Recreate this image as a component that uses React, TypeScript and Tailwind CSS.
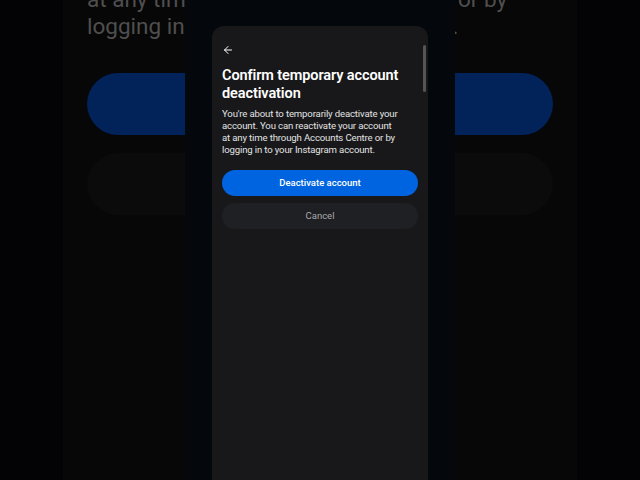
import { ArrowLeft } from "lucide-react";

const font = { fontFamily: "Roboto, 'Noto Sans', sans-serif" };

function Backdrop() {
  return (
    <div className="ml-[63px] w-[514px] h-full bg-[#070707] pl-[24px] pr-[24px] overflow-hidden">
      <div className="mt-[-14px] text-[22.5px] leading-[27px] text-[#4f4f4f] whitespace-nowrap">
        <p>at any time through Accounts Centre or by</p>
        <p>logging in to your Instagram account.</p>
      </div>
      <div className="mt-[33px] h-[62px] rounded-full bg-[#02225a]" />
      <div className="mt-[18px] h-[62px] rounded-full bg-[#0b0b0c]" />
    </div>
  );
}

function Dialog() {
  return (
    <div className="relative mt-[26px] w-[216px] flex-1 rounded-t-[12px] bg-[#18181a] px-[10px] pt-[18px]">
      <div className="absolute right-[2px] top-[19px] h-[47px] w-[3px] rounded-full bg-[#555558]" />
      <ArrowLeft size={12} strokeWidth={2} className="text-white" />
      <h1 className="mt-[11px] text-[14.5px] leading-[18px] font-semibold text-white tracking-[-0.1px]">
        Confirm temporary account deactivation
      </h1>
      <p className="mt-[5px] text-[9.6px] leading-[12px] text-[#e2e2e2] tracking-[-0.15px] whitespace-nowrap">
        You're about to temporarily deactivate your
        <br />
        account. You can reactivate your account
        <br />
        at any time through Accounts Centre or by
        <br />
        logging in to your Instagram account.
      </p>
      <button className="mt-[14px] w-full h-[26px] rounded-full bg-[#0064e0] text-[9.5px] font-medium text-white">
        Deactivate account
      </button>
      <button className="mt-[7px] w-full h-[26px] rounded-full bg-[#1f2023] text-[9.5px] text-[#a8a8a8]">
        Cancel
      </button>
    </div>
  );
}

export default function App() {
  return (
    <div className="relative w-[640px] h-[480px] overflow-hidden bg-[#030305]" style={font}>
      <Backdrop />
      <div className="absolute left-[185px] top-0 bottom-0 w-[270px] bg-[#04070b] flex flex-col items-center">
        <Dialog />
      </div>
    </div>
  );
}
